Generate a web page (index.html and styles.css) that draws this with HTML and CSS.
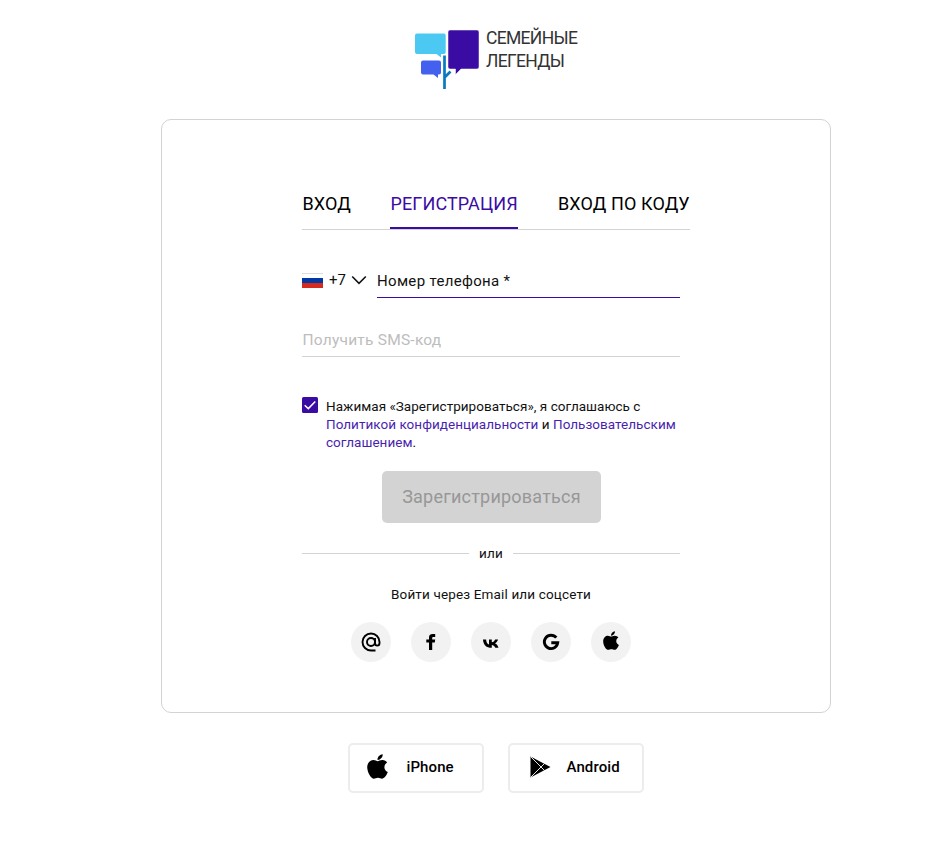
FILE: index.html
```html
<!DOCTYPE html>
<html lang="ru">
<head>
<meta charset="utf-8">
<title>Семейные легенды</title>
<link rel="stylesheet" href="styles.css">
</head>
<body>
<svg class="defs" width="0" height="0" aria-hidden="true">
  <symbol id="apple" viewBox="0 0 384 470">
    <path d="M318.700 236.700c-.2-36.700 16.400-64.400 50-84.800-18.800-26.900-47.200-41.700-84.700-44.600-35.500-2.800-74.300 20.700-88.500 20.700-15 0-49.400-19.700-76.400-19.700C63.300 109.200 4 153.200 4 241.500q0 39.300 14.400 81.200c12.800 36.700 59 126.700 107.200 125.200 25.200-.6 43-17.900 75.800-17.900 31.800 0 48.300 17.900 76.400 17.900 48.600-.7 90.400-82.500 102.600-119.300-65.200-30.700-61.700-90-61.700-91.900zM262.100 72.500c27.300-32.400 24.800-61.900 24-72.500-24.100 1.400-52 16.400-67.900 34.900-17.500 19.800-27.800 44.300-25.600 71.900 26.100 2 49.900-11.400 69.500-34.300z"/>
  </symbol>
</svg>
<div class="page">
  <header class="logo">
    <svg class="logo-mark" width="65" height="60" viewBox="0 0 65 60">
      <path fill="#4cc9f3" d="M2 3.500h27q1.700 0 1.700 2v16.500q0 2-1.700 2h-3v3.500l-4.500-3.500H2q-2 0-2-2v-16.500q0-2 2-2z"/>
      <path fill="#4361ee" d="M8 30.500h16q2 0 2 2v10q0 2-2 2h-1v3.500l-4.500-3.500H8q-2 0-2-2v-10q0-2 2-2z"/>
      <path fill="none" stroke="#0a7abf" stroke-width="2.700" d="M29.500 25.500V59M29.500 47.500l6-6"/>
      <path fill="#3a0ca3" stroke="#fff" stroke-width=".5" d="M35 0h27q2 0 2 2v35q0 2-2 2H46l-5.500 5.500V39H35q-2 0-2-2V2q0-2 2-2z"/>
    </svg>
    <div class="logo-text">СЕМЕЙНЫЕ<br>ЛЕГЕНДЫ</div>
  </header>

  <main class="card">
    <nav class="tabs">
      <a class="tab tab-login">ВХОД</a>
      <a class="tab tab-register active">РЕГИСТРАЦИЯ</a>
      <a class="tab tab-code">ВХОД ПО КОДУ</a>
    </nav>
    <form class="form">
      <div class="phone-row">
        <div class="country">
          <span class="flag"></span>
          <span class="prefix">+7</span>
          <svg class="chevron" width="16" height="10" viewBox="0 0 16 10"><path d="M1.200 1.500L8 8.300l6.800-6.800" fill="none" stroke="#111" stroke-width="1.600"/></svg>
        </div>
        <div class="phone">Номер телефона *</div>
      </div>
      <div class="sms">Получить SMS-код</div>
      <div class="agree">
        <svg class="check" width="16" height="16" viewBox="0 0 16 16"><rect width="16" height="16" rx="1.500" fill="#3a0ca3"/><path d="M2.700 8.300l3.600 3.300 7-7.200" fill="none" stroke="#fff" stroke-width="1.500"/></svg>
        <p class="agree-text">Нажимая «Зарегистрироваться», я соглашаюсь с<br><a>Политикой конфиденциальности</a> и <a>Пользовательским</a><br><a>соглашением</a>.</p>
      </div>
      <button class="submit" type="button" disabled>Зарегистрироваться</button>
      <div class="divider"><span class="or">или</span></div>
      <p class="social-title">Войти через Email или соцсети</p>
      <div class="socials">
        <a class="social"><svg width="20" height="20" viewBox="0 0 20 20" fill="none" stroke="#000" stroke-width="1.900"><circle cx="10" cy="10" r="4"/><path d="M14 6v5c0 3.500 4.500 3.500 4.500 0v-1A8.500 8.500 0 1 0 10 18.500h4.500"/></svg></a>
        <a class="social"><svg width="20" height="20" viewBox="0 0 20 20"><path d="M8 18v-7.500H5.300V7.500H8V5.300C8 3 9.500 2 11.500 2h2.700v2.900h-1.700c-1 0-1.300.5-1.300 1.300v1.300h3l-.4 3h-2.600V18z"/></svg></a>
        <a class="social"><svg class="vk" width="18" height="11" viewBox="0 0 18 12" preserveAspectRatio="none"><path d="M9.600 10.700C4.300 10.700 1.300 7.300 1 1.500h3.100c.1 3.500 1.500 5 2.900 5.500v-5.500h2.800v3.200c1.500-.2 2.700-1.500 3.300-3.200h2.900c-.4 1.800-1.600 3.400-3 4.200 1.500.8 2.800 2.200 3.500 5h-3.200c-.5-1.700-1.800-3-3.500-3.200v3.200z"/></svg></a>
        <a class="social"><svg width="18" height="18" viewBox="0 0 18 18" fill="none" stroke="#000" stroke-width="2.900"><path d="M14.300 4.700A6.700 6.700 0 1 0 15.700 9.800H9.300"/></svg></a>
        <a class="social"><svg class="apple-small" width="16" height="20"><use href="#apple"/></svg></a>
      </div>
    </form>
  </main>

  <footer class="stores">
    <a class="store"><span class="store-icon"><svg width="21" height="26"><use href="#apple"/></svg></span><span>iPhone</span></a>
    <a class="store"><span class="store-icon android-icon"><svg width="21" height="22" viewBox="0 0 21 22"><path d="M.5.500L20.500 11 .5 21.500z"/><path d="M1 1l13.500 13.500M1 21L14.500 7.500" stroke="#fff" stroke-width=".9" fill="none"/></svg></span><span>Android</span></a>
  </footer>
</div>
</body>
</html>
```
FILE: styles.css
```css
* { box-sizing: border-box; }
body {
  margin: 0;
  background: #fff;
  color: #111;
  font-family: Roboto, "Liberation Sans", sans-serif;
  overflow: hidden;
}
.defs { display: none; }
.page { width: 670px; margin-left: 161px; padding-top: 30px; }
.logo { display: flex; height: 60px; margin-left: 254px; }
.logo-text {
  margin: -3px 0 0 6px;
  font-size: 17.500px;
  line-height: 22.500px;
  font-weight: 400;
  letter-spacing: -.68px;
  color: #333;
  white-space: nowrap;
}
.card {
  height: 594px;
  margin-top: 29px;
  padding: 71px 140px 0;
  border: 1px solid #d3d3d3;
  border-radius: 10px;
}
.tabs {
  display: flex;
  gap: 40px;
  width: 388px;
  height: 39px;
  border-bottom: 1px solid #d3d3d3;
}
.tab {
  height: 38px;
  font-size: 18px;
  line-height: 25px;
  letter-spacing: .12px;
  text-indent: .5px;
  color: #000;
  white-space: nowrap;
}
.tab-login { width: 48px; }
.tab-register { width: 128px; }
.tab-code { width: 132px; text-indent: 0; }
.tab.active { color: #3a0ca3; border-bottom: 2px solid #3a0ca3; }
.form { width: 378px; }
.phone-row { display: flex; height: 68px; }
.country { display: flex; align-items: center; width: 75px; padding-top: 32px; }
.flag {
  width: 21px;
  height: 15px;
  border: 1px solid #ddd;
  border-width: 1px 0 0;
  background: linear-gradient(#fff 0 4px, #0039a6 4px 9px, #d52b1e 9px);
}
.prefix { width: 23px; padding-left: 6px; font-size: 15px; }
.chevron { margin-left: 5px; }
.phone {
  flex: 1;
  padding-top: 38px;
  border-bottom: 1px solid #3a0ca3;
  font-size: 15px;
  line-height: 26px;
  letter-spacing: .33px;
}
.sms {
  height: 59px;
  padding-top: 29px;
  border-bottom: 1px solid #d3d3d3;
  font-size: 15.500px;
  line-height: 26px;
  letter-spacing: .23px;
  text-indent: .5px;
  color: #bdbdbd;
}
.agree { display: flex; gap: 8px; margin-top: 40px; }
.check { flex: none; }
.agree-text { margin: 0; font-size: 13.500px; line-height: 18px; letter-spacing: .03px; white-space: nowrap; }
.agree-text a { color: #4a1fb0; }
.submit {
  display: block;
  width: 219px;
  height: 52px;
  margin: 20px auto 0 80px;
  padding: 0 0 2px;
  border: 0;
  border-radius: 5px;
  background: #d3d3d3;
  color: #979797;
  font: 400 18px Roboto, sans-serif;
  letter-spacing: .22px;
  white-space: nowrap;
}
.divider {
  display: flex;
  align-items: center;
  gap: 10px;
  height: 18px;
  margin-top: 21px;
  font-size: 13.500px;
}
.or { width: 24px; margin-top: -1px; letter-spacing: .2px; }
.divider::before, .divider::after { content: ""; flex: 1; height: 1px; background: #d3d3d3; }
.social-title {
  margin: 23px 0 0;
  font-size: 13.500px;
  line-height: 18px;
  letter-spacing: .15px;
  text-align: center;
  white-space: nowrap;
}
.socials { display: flex; justify-content: center; gap: 20px; margin-top: 19px; }
.social {
  display: flex;
  align-items: center;
  justify-content: center;
  width: 40px;
  height: 40px;
  border-radius: 50%;
  background: #f2f2f2;
}
.vk { margin-top: 2px; }
.apple-small { margin-top: -2px; }
.stores { display: flex; gap: 24px; margin: 30px 0 0 187px; }
.store {
  display: flex;
  align-items: center;
  width: 136px;
  height: 50px;
  padding-bottom: 2px;
  border: 2px solid #ececec;
  border-radius: 5px;
  font-size: 15px;
  font-weight: 500;
  letter-spacing: .1px;
  color: #000;
}
.store-icon { display: flex; width: 56.500px; padding-left: 17px; }
.android-icon { padding-left: 20px; }
```
